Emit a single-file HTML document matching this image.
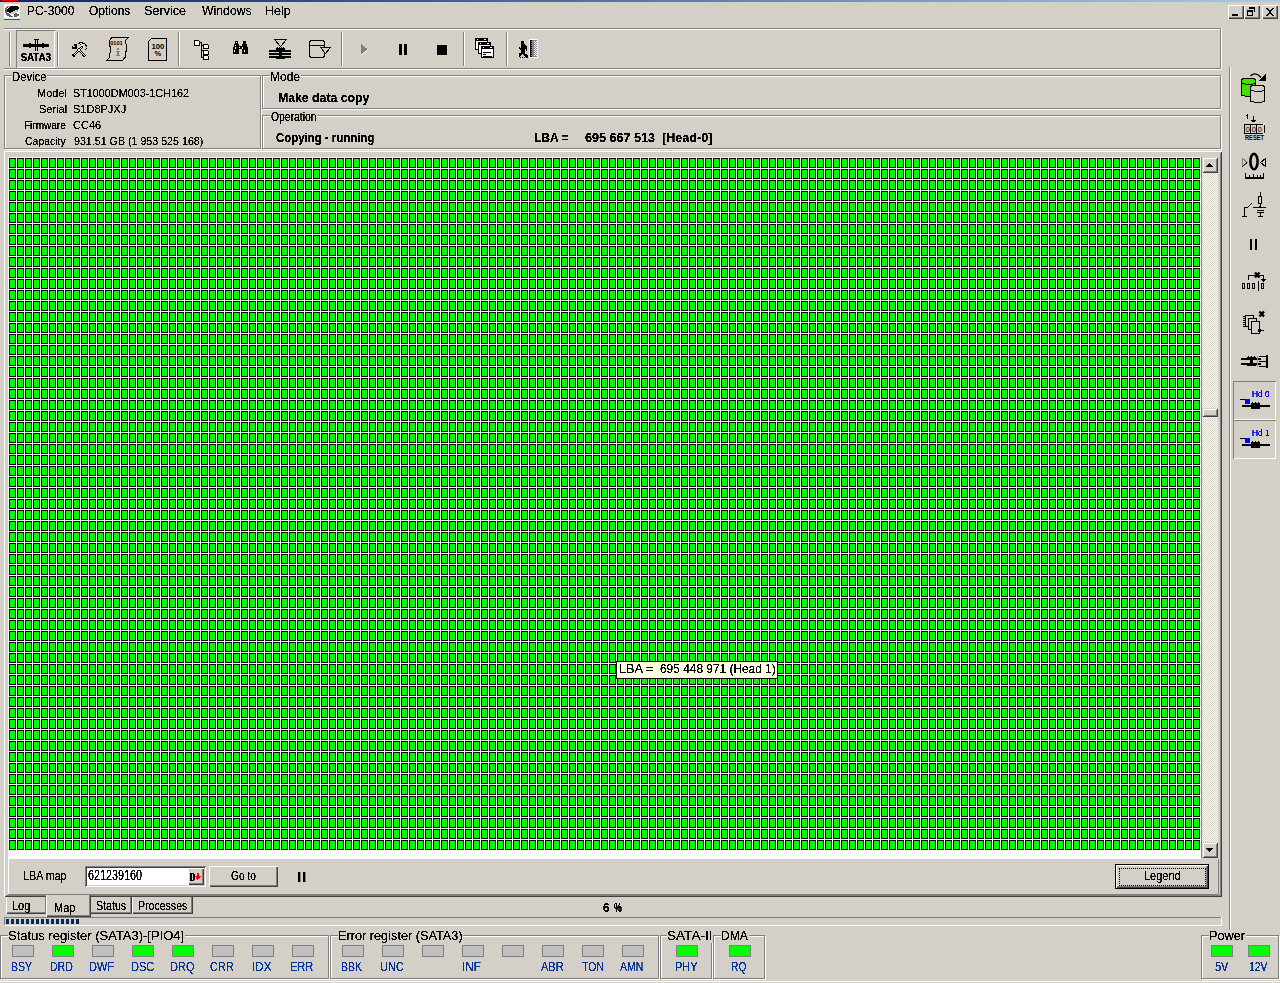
<!DOCTYPE html>
<html><head><meta charset="utf-8">
<style>
html,body{margin:0;padding:0;}
body{width:1280px;height:983px;overflow:hidden;background:#d4d0c8;position:relative;font-family:"Liberation Sans",sans-serif;color:#000;}
.a{position:absolute;box-sizing:border-box;}
.t{position:absolute;white-space:nowrap;line-height:16px;filter:url(#crisp);}
svg{position:absolute;shape-rendering:crispEdges;}
</style></head><body>
<svg width="0" height="0" style="position:absolute"><filter id="crisp" x="-5%" y="-20%" width="110%" height="140%"><feComponentTransfer><feFuncA type="discrete" tableValues="0 0 0 0.75 0.75 1 1 1 1 1"/></feComponentTransfer></filter></svg>
<div class="a" style="left:0;top:0;width:1280px;height:2px;background:linear-gradient(90deg,#0a246a,#a6caf0);"></div>
<div class="a" style="left:2px;top:0px;width:16px;height:1px;background:#f00;"></div>
<div class="t" style="left:27.00px;top:1.92px;font-size:12px;color:#000;transform:scale(1.0000,1.1111);transform-origin:0 0;">PC-3000</div>
<div class="t" style="left:89.00px;top:1.92px;font-size:12px;color:#000;transform:scale(1.0000,1.1111);transform-origin:0 0;">Options</div>
<div class="t" style="left:143.95px;top:1.92px;font-size:12px;color:#000;transform:scale(1.0513,1.1111);transform-origin:0 0;">Service</div>
<div class="t" style="left:202.00px;top:1.92px;font-size:12px;color:#000;transform:scale(1.0208,1.1111);transform-origin:0 0;">Windows</div>
<div class="t" style="left:264.96px;top:1.92px;font-size:12px;color:#000;transform:scale(1.0435,1.1111);transform-origin:0 0;">Help</div>
<div class="a" style="left:1228px;top:5px;width:16px;height:14px;background:#d4d0c8;box-shadow:inset 1px 1px #fff,inset -1px -1px #404040,inset -2px -2px #808080;"></div>
<div class="a" style="left:1244px;top:5px;width:16px;height:14px;background:#d4d0c8;box-shadow:inset 1px 1px #fff,inset -1px -1px #404040,inset -2px -2px #808080;"></div>
<div class="a" style="left:1262px;top:5px;width:16px;height:14px;background:#d4d0c8;box-shadow:inset 1px 1px #fff,inset -1px -1px #404040,inset -2px -2px #808080;"></div>
<div class="a" style="left:1232px;top:14px;width:6px;height:2px;background:#000;"></div>
<svg style="left:1244px;top:5px" width="16" height="14"><path d="M5 2h6v5h-1V4H5z" fill="#000"/><path d="M3 5h6v6H3zM4 7v3h4V7z" fill="#000" fill-rule="evenodd"/></svg>
<svg style="left:1262px;top:5px" width="16" height="14"><path d="M4 3h2v1h1v1h2V4h1V3h2v1h-1v1h-1v1H9v2h1v1h1v1h1v1h-2V10H9V9H7v1H6v1H4v-1h1V9h1V8h1V6H6V5H5V4H4z" fill="#000"/></svg>
<div class="a" style="left:4px;top:28px;width:1217px;height:1px;background:#808080;"></div>
<div class="a" style="left:4px;top:29px;width:1218px;height:1px;background:#fff;"></div>
<div class="a" style="left:4px;top:68px;width:1217px;height:1px;background:#808080;"></div>
<div class="a" style="left:4px;top:69px;width:1218px;height:1px;background:#fff;"></div>
<div class="a" style="left:1220px;top:28px;width:1px;height:41px;background:#808080;"></div>
<div class="a" style="left:1221px;top:28px;width:1px;height:42px;background:#fff;"></div>
<div class="a" style="left:9px;top:32px;width:1px;height:34px;background:#808080;"></div>
<div class="a" style="left:10px;top:32px;width:1px;height:34px;background:#fff;"></div>
<div class="a" style="left:16px;top:30px;width:39px;height:38px;box-shadow:inset 1px 1px #808080,inset -1px -1px #fff;"></div>
<div class="a" style="left:57px;top:32px;width:1px;height:34px;background:#808080;"></div>
<div class="a" style="left:58px;top:32px;width:1px;height:34px;background:#fff;"></div>
<div class="a" style="left:178px;top:32px;width:1px;height:34px;background:#808080;"></div>
<div class="a" style="left:179px;top:32px;width:1px;height:34px;background:#fff;"></div>
<div class="a" style="left:341px;top:32px;width:1px;height:34px;background:#808080;"></div>
<div class="a" style="left:342px;top:32px;width:1px;height:34px;background:#fff;"></div>
<div class="a" style="left:463px;top:32px;width:1px;height:34px;background:#808080;"></div>
<div class="a" style="left:464px;top:32px;width:1px;height:34px;background:#fff;"></div>
<div class="a" style="left:506px;top:32px;width:1px;height:34px;background:#808080;"></div>
<div class="a" style="left:507px;top:32px;width:1px;height:34px;background:#fff;"></div>
<div class="a" style="left:5px;top:76px;width:257px;height:74px;border:1px solid #fff;"></div>
<div class="a" style="left:4px;top:75px;width:257px;height:74px;border:1px solid #808080;"></div>
<div class="a" style="left:263px;top:76px;width:959px;height:34px;border:1px solid #fff;"></div>
<div class="a" style="left:262px;top:75px;width:959px;height:34px;border:1px solid #808080;"></div>
<div class="a" style="left:263px;top:116px;width:959px;height:34px;border:1px solid #fff;"></div>
<div class="a" style="left:262px;top:115px;width:959px;height:34px;border:1px solid #808080;"></div>
<div class="a" style="left:12px;top:70px;width:35px;height:14px;background:#d4d0c8;"></div>
<div class="t" style="left:12.06px;top:69.00px;font-size:12px;color:#000;transform:scale(0.9429,1.0000);transform-origin:0 0;">Device</div>
<div class="a" style="left:270px;top:70px;width:31px;height:14px;background:#d4d0c8;"></div>
<div class="t" style="left:270.00px;top:69.00px;font-size:12px;color:#000;">Mode</div>
<div class="a" style="left:270px;top:110px;width:47px;height:14px;background:#d4d0c8;"></div>
<div class="t" style="left:271.00px;top:109.00px;font-size:12px;color:#000;transform:scale(0.8654,1.0000);transform-origin:0 0;">Operation</div>
<div class="t" style="left:37.00px;top:85.00px;font-size:11px;color:#000;">Model</div>
<div class="t" style="left:39.00px;top:101.00px;font-size:11px;color:#000;">Serial</div>
<div class="t" style="left:24.09px;top:117.00px;font-size:11px;color:#000;transform:scale(0.9111,1.0000);transform-origin:0 0;">Firmware</div>
<div class="t" style="left:25.05px;top:133.00px;font-size:11px;color:#000;transform:scale(0.9524,1.0000);transform-origin:0 0;">Capacity</div>
<div class="t" style="left:73.02px;top:85.00px;font-size:11px;color:#000;transform:scale(0.9829,1.0000);transform-origin:0 0;">ST1000DM003-1CH162</div>
<div class="t" style="left:73.00px;top:101.00px;font-size:11px;color:#000;">S1D8PJXJ</div>
<div class="t" style="left:73.00px;top:117.00px;font-size:11px;color:#000;">CC46</div>
<div class="t" style="left:74.00px;top:133.00px;font-size:11px;color:#000;transform:scale(0.9699,1.0000);transform-origin:0 0;">931.51 GB (1 953 525 168)</div>
<div class="t" style="left:277.98px;top:90.00px;font-size:12px;font-weight:bold;color:#000;transform:scale(1.0227,1.0000);transform-origin:0 0;">Make data copy</div>
<div class="t" style="left:276.00px;top:130.00px;font-size:12px;font-weight:bold;color:#000;transform:scale(0.9515,1.0000);transform-origin:0 0;">Copying - running</div>
<div class="t" style="left:534.00px;top:130.00px;font-size:12px;font-weight:bold;color:#000;">LBA =</div>
<div class="t" style="left:585.00px;top:130.00px;font-size:12px;font-weight:bold;color:#000;transform:scale(1.0496,1.0000);transform-origin:0 0;">695 667 513&nbsp; [Head-0]</div>
<div class="a" style="left:4px;top:151px;width:1218px;height:746px;box-shadow:inset 1px 1px #fff,inset -1px -1px #404040,inset 2px 2px #d4d0c8,inset -2px -2px #808080;"></div>
<div class="a" style="left:8px;top:157px;width:1193px;height:702px;background:#fff;"></div>
<svg style="left:8px;top:157px" width="1193" height="694"><defs><pattern id="cell" x="0" y="0" width="8" height="11" patternUnits="userSpaceOnUse"><rect x="0" y="0" width="8" height="11" fill="#fff"/><rect x="1" y="1" width="7" height="10" fill="#000"/><rect x="2" y="2" width="5" height="8" fill="#00ff00"/></pattern></defs><rect x="0" y="0" width="1193" height="694" fill="url(#cell)"/></svg>
<div class="a" style="left:1201px;top:157px;width:1px;height:701px;background:#808080;"></div>
<svg style="left:1202px;top:157px" width="16" height="701"><defs><pattern id="chk" x="0" y="0" width="2" height="2" patternUnits="userSpaceOnUse"><rect width="2" height="2" fill="#fff"/><rect x="1" y="0" width="1" height="1" fill="#d4d0c8"/><rect x="0" y="1" width="1" height="1" fill="#d4d0c8"/></pattern></defs><rect width="16" height="701" fill="url(#chk)"/></svg>
<div class="a" style="left:1202px;top:157px;width:16px;height:16px;background:#d4d0c8;box-shadow:inset 1px 1px #d4d0c8,inset -1px -1px #404040,inset 2px 2px #fff,inset -2px -2px #808080;"></div>
<svg style="left:1202px;top:157px" width="16" height="16"><path d="M7 6h1v1h1v1h1v1h1v1H4V9h1V8h1V7h1z" fill="#000"/></svg>
<div class="a" style="left:1202px;top:842px;width:16px;height:16px;background:#d4d0c8;box-shadow:inset 1px 1px #d4d0c8,inset -1px -1px #404040,inset 2px 2px #fff,inset -2px -2px #808080;"></div>
<svg style="left:1202px;top:842px" width="16" height="16"><path d="M4 6h7v1h-1v1h-1v1h-1v1H7V9H6V8H5V7H4z" fill="#000"/></svg>
<div class="a" style="left:1202px;top:408px;width:16px;height:9px;background:#d4d0c8;box-shadow:inset 1px 1px #d4d0c8,inset -1px -1px #404040,inset 2px 2px #fff,inset -2px -2px #808080;"></div>
<div class="a" style="left:8px;top:859px;width:1px;height:35px;background:#fff;"></div>
<div class="a" style="left:8px;top:894px;width:1211px;height:1px;background:#808080;"></div>
<div class="a" style="left:1218px;top:859px;width:1px;height:36px;background:#808080;"></div>
<div class="a" style="left:616px;top:661px;width:162px;height:18px;background:#ffffe1;border:1px solid #000;"></div>
<div class="t" style="left:618.94px;top:659.92px;font-size:12px;color:#000;transform:scale(1.0645,1.1111);transform-origin:0 0;">LBA =</div>
<div class="t" style="left:660.01px;top:659.92px;font-size:12px;color:#000;transform:scale(0.9913,1.1111);transform-origin:0 0;">695 448 971 (Head 1)</div>
<div class="t" style="left:23.02px;top:865.75px;font-size:11px;color:#000;transform:scale(0.9767,1.1250);transform-origin:0 0;">LBA map</div>
<div class="a" style="left:85px;top:866px;width:121px;height:21px;background:#fff;box-shadow:inset 1px 1px #808080,inset -1px -1px #fff,inset 2px 2px #404040,inset -2px -2px #d4d0c8;"></div>
<div class="t" style="left:88.02px;top:865.25px;font-size:11px;color:#000;transform:scale(0.9815,1.2500);transform-origin:0 0;">621239160</div>
<div class="a" style="left:188px;top:868px;width:16px;height:17px;background:#d4d0c8;box-shadow:inset 1px 1px #fff,inset -1px -1px #404040,inset -2px -2px #808080;"></div>
<svg style="left:188px;top:868px" width="16" height="17"><path d="M2 5h4v1h1v6H6v1H2zM4 6v6h1V6z" fill="#000" fill-rule="evenodd"/><path d="M9 5h2v3h2v1h-1v1h-1v1h-1v1H9v-1H8V9H7V8h2z" fill="#f00"/></svg>
<div class="a" style="left:209px;top:866px;width:69px;height:21px;background:#d4d0c8;box-shadow:inset 1px 1px #fff,inset -1px -1px #404040,inset -2px -2px #808080;"></div>
<div class="t" style="left:231.00px;top:865.75px;font-size:11px;color:#000;transform:scale(0.9259,1.1250);transform-origin:0 0;">Go to</div>
<div class="a" style="left:298px;top:872px;width:2px;height:10px;background:#000;"></div>
<div class="a" style="left:303px;top:872px;width:2px;height:10px;background:#000;"></div>
<div class="a" style="left:300px;top:872px;width:1px;height:10px;background:rgba(0,0,0,0.35);"></div>
<div class="a" style="left:305px;top:872px;width:1px;height:10px;background:rgba(0,0,0,0.35);"></div>
<div class="a" style="left:1115px;top:864px;width:94px;height:25px;background:#d4d0c8;border:1px solid #000;box-shadow:inset 1px 1px #fff,inset -1px -1px #404040,inset -2px -2px #808080;"></div>
<div class="a" style="left:1119px;top:868px;width:87px;height:18px;border:1px dotted #000;"></div>
<div class="t" style="left:1144.00px;top:865.75px;font-size:11px;color:#000;transform:scale(1.0000,1.1250);transform-origin:0 0;">Legend</div>
<div class="a" style="left:6px;top:897px;width:41px;height:17px;background:#d4d0c8;box-shadow:inset 1px 0 #fff,inset -1px -1px #404040,inset -2px -2px #808080;"></div>
<div class="a" style="left:91px;top:897px;width:41px;height:17px;background:#d4d0c8;box-shadow:inset 0px 0 #fff,inset -1px -1px #404040,inset -2px -2px #808080;"></div>
<div class="a" style="left:132px;top:897px;width:61px;height:17px;background:#d4d0c8;box-shadow:inset 1px 0 #fff,inset -1px -1px #404040,inset -2px -2px #808080;"></div>
<div class="a" style="left:46px;top:895px;width:45px;height:22px;background:#d4d0c8;box-shadow:inset 1px 0 #fff,inset -1px -1px #404040,inset -2px -2px #808080;"></div>
<div class="t" style="left:12.00px;top:895.75px;font-size:11px;color:#000;transform:scale(1.0000,1.1250);transform-origin:0 0;">Log</div>
<div class="t" style="left:54.00px;top:897.75px;font-size:11px;color:#000;transform:scale(1.0000,1.1250);transform-origin:0 0;">Map</div>
<div class="t" style="left:96.03px;top:895.75px;font-size:11px;color:#000;transform:scale(0.9667,1.1250);transform-origin:0 0;">Status</div>
<div class="t" style="left:138.04px;top:895.75px;font-size:11px;color:#000;transform:scale(0.9600,1.1250);transform-origin:0 0;">Processes</div>
<div class="t" style="left:603.00px;top:900.00px;font-size:12px;font-weight:bold;color:#000;">6</div>
<div class="t" style="left:614.00px;top:900.00px;font-size:12px;font-weight:bold;color:#000;transform:scale(0.7273,1.0000);transform-origin:0 0;">%</div>
<div class="a" style="left:4px;top:917px;width:1218px;height:1px;background:#808080;"></div>
<div class="a" style="left:4px;top:917px;width:1px;height:9px;background:#808080;"></div>
<div class="a" style="left:4px;top:925px;width:1218px;height:1px;background:#fff;"></div>
<div class="a" style="left:1221px;top:917px;width:1px;height:9px;background:#fff;"></div>
<div class="a" style="left:6px;top:919px;width:3px;height:5px;background:#0a246a;"></div>
<div class="a" style="left:11px;top:919px;width:3px;height:5px;background:#0a246a;"></div>
<div class="a" style="left:16px;top:919px;width:3px;height:5px;background:#0a246a;"></div>
<div class="a" style="left:21px;top:919px;width:3px;height:5px;background:#0a246a;"></div>
<div class="a" style="left:26px;top:919px;width:3px;height:5px;background:#0a246a;"></div>
<div class="a" style="left:31px;top:919px;width:3px;height:5px;background:#0a246a;"></div>
<div class="a" style="left:36px;top:919px;width:3px;height:5px;background:#0a246a;"></div>
<div class="a" style="left:41px;top:919px;width:3px;height:5px;background:#0a246a;"></div>
<div class="a" style="left:46px;top:919px;width:3px;height:5px;background:#0a246a;"></div>
<div class="a" style="left:51px;top:919px;width:3px;height:5px;background:#0a246a;"></div>
<div class="a" style="left:56px;top:919px;width:3px;height:5px;background:#0a246a;"></div>
<div class="a" style="left:61px;top:919px;width:3px;height:5px;background:#0a246a;"></div>
<div class="a" style="left:66px;top:919px;width:3px;height:5px;background:#0a246a;"></div>
<div class="a" style="left:71px;top:919px;width:3px;height:5px;background:#0a246a;"></div>
<div class="a" style="left:76px;top:919px;width:3px;height:5px;background:#0a246a;"></div>
<div class="a" style="left:1px;top:936px;width:329px;height:44px;border:1px solid #fff;"></div>
<div class="a" style="left:0px;top:935px;width:329px;height:44px;border:1px solid #808080;"></div>
<div class="a" style="left:331px;top:936px;width:329px;height:44px;border:1px solid #fff;"></div>
<div class="a" style="left:330px;top:935px;width:329px;height:44px;border:1px solid #808080;"></div>
<div class="a" style="left:661px;top:936px;width:52px;height:44px;border:1px solid #fff;"></div>
<div class="a" style="left:660px;top:935px;width:52px;height:44px;border:1px solid #808080;"></div>
<div class="a" style="left:714px;top:936px;width:52px;height:44px;border:1px solid #fff;"></div>
<div class="a" style="left:713px;top:935px;width:52px;height:44px;border:1px solid #808080;"></div>
<div class="a" style="left:1202px;top:936px;width:78px;height:44px;border:1px solid #fff;"></div>
<div class="a" style="left:1201px;top:935px;width:78px;height:44px;border:1px solid #808080;"></div>
<div class="a" style="left:8px;top:928px;width:177px;height:15px;background:#d4d0c8;"></div>
<div class="t" style="left:7.92px;top:928.00px;font-size:12px;color:#000;transform:scale(1.0807,1.0000);transform-origin:0 0;">Status register (SATA3)-[PIO4]</div>
<div class="a" style="left:338px;top:928px;width:125px;height:15px;background:#d4d0c8;"></div>
<div class="t" style="left:337.94px;top:928.00px;font-size:12px;color:#000;transform:scale(1.0603,1.0000);transform-origin:0 0;">Error register (SATA3)</div>
<div class="a" style="left:667px;top:928px;width:46px;height:15px;background:#d4d0c8;"></div>
<div class="t" style="left:666.87px;top:928.00px;font-size:12px;color:#000;transform:scale(1.1316,1.0000);transform-origin:0 0;">SATA-II</div>
<div class="a" style="left:721px;top:928px;width:28px;height:15px;background:#d4d0c8;"></div>
<div class="t" style="left:721.00px;top:928.00px;font-size:12px;color:#000;">DMA</div>
<div class="a" style="left:1209px;top:928px;width:37px;height:15px;background:#d4d0c8;"></div>
<div class="t" style="left:1208.94px;top:928.00px;font-size:12px;color:#000;transform:scale(1.0606,1.0000);transform-origin:0 0;">Power</div>
<div class="a" style="left:0px;top:981px;width:1280px;height:1px;background:#fff;"></div>
<div class="a" style="left:12px;top:945px;width:22px;height:12px;border:1px solid #808080;background:#c0c0c0;"></div>
<div class="t" style="left:11.05px;top:956.75px;font-size:11px;color:#003399;transform:scale(0.9524,1.1250);transform-origin:0 0;">BSY</div>
<div class="a" style="left:52px;top:945px;width:22px;height:12px;border:1px solid #808080;background:#00ff00;"></div>
<div class="t" style="left:50.04px;top:956.75px;font-size:11px;color:#003399;transform:scale(0.9565,1.1250);transform-origin:0 0;">DRD</div>
<div class="a" style="left:92px;top:945px;width:22px;height:12px;border:1px solid #808080;background:#c0c0c0;"></div>
<div class="t" style="left:89.00px;top:956.75px;font-size:11px;color:#003399;transform:scale(1.0000,1.1250);transform-origin:0 0;">DWF</div>
<div class="a" style="left:132px;top:945px;width:22px;height:12px;border:1px solid #808080;background:#00ff00;"></div>
<div class="t" style="left:131.00px;top:956.75px;font-size:11px;color:#003399;transform:scale(1.0000,1.1250);transform-origin:0 0;">DSC</div>
<div class="a" style="left:172px;top:945px;width:22px;height:12px;border:1px solid #808080;background:#00ff00;"></div>
<div class="t" style="left:170.00px;top:956.75px;font-size:11px;color:#003399;transform:scale(1.0000,1.1250);transform-origin:0 0;">DRQ</div>
<div class="a" style="left:212px;top:945px;width:22px;height:12px;border:1px solid #808080;background:#c0c0c0;"></div>
<div class="t" style="left:210.00px;top:956.75px;font-size:11px;color:#003399;transform:scale(1.0000,1.1250);transform-origin:0 0;">CRR</div>
<div class="a" style="left:252px;top:945px;width:22px;height:12px;border:1px solid #808080;background:#c0c0c0;"></div>
<div class="t" style="left:251.94px;top:956.75px;font-size:11px;color:#003399;transform:scale(1.0588,1.1250);transform-origin:0 0;">IDX</div>
<div class="a" style="left:292px;top:945px;width:22px;height:12px;border:1px solid #808080;background:#c0c0c0;"></div>
<div class="t" style="left:290.00px;top:956.75px;font-size:11px;color:#003399;transform:scale(1.0000,1.1250);transform-origin:0 0;">ERR</div>
<div class="a" style="left:342px;top:945px;width:22px;height:12px;border:1px solid #808080;background:#c0c0c0;"></div>
<div class="t" style="left:341.05px;top:956.75px;font-size:11px;color:#003399;transform:scale(0.9524,1.1250);transform-origin:0 0;">BBK</div>
<div class="a" style="left:382px;top:945px;width:22px;height:12px;border:1px solid #808080;background:#c0c0c0;"></div>
<div class="t" style="left:380.00px;top:956.75px;font-size:11px;color:#003399;transform:scale(1.0000,1.1250);transform-origin:0 0;">UNC</div>
<div class="a" style="left:422px;top:945px;width:22px;height:12px;border:1px solid #808080;background:#c0c0c0;"></div>
<div class="a" style="left:462px;top:945px;width:22px;height:12px;border:1px solid #808080;background:#c0c0c0;"></div>
<div class="t" style="left:461.94px;top:956.75px;font-size:11px;color:#003399;transform:scale(1.0625,1.1250);transform-origin:0 0;">INF</div>
<div class="a" style="left:502px;top:945px;width:22px;height:12px;border:1px solid #808080;background:#c0c0c0;"></div>
<div class="a" style="left:542px;top:945px;width:22px;height:12px;border:1px solid #808080;background:#c0c0c0;"></div>
<div class="t" style="left:541.00px;top:956.75px;font-size:11px;color:#003399;transform:scale(1.0000,1.1250);transform-origin:0 0;">ABR</div>
<div class="a" style="left:582px;top:945px;width:22px;height:12px;border:1px solid #808080;background:#c0c0c0;"></div>
<div class="t" style="left:582.00px;top:956.75px;font-size:11px;color:#003399;transform:scale(0.9545,1.1250);transform-origin:0 0;">TON</div>
<div class="a" style="left:622px;top:945px;width:22px;height:12px;border:1px solid #808080;background:#c0c0c0;"></div>
<div class="t" style="left:620.00px;top:956.75px;font-size:11px;color:#003399;transform:scale(0.9583,1.1250);transform-origin:0 0;">AMN</div>
<div class="a" style="left:676px;top:945px;width:22px;height:12px;border:1px solid #808080;background:#00ff00;"></div>
<div class="t" style="left:675.00px;top:956.75px;font-size:11px;color:#003399;transform:scale(1.0000,1.1250);transform-origin:0 0;">PHY</div>
<div class="a" style="left:729px;top:945px;width:22px;height:12px;border:1px solid #808080;background:#00ff00;"></div>
<div class="t" style="left:731.07px;top:956.75px;font-size:11px;color:#003399;transform:scale(0.9333,1.1250);transform-origin:0 0;">RQ</div>
<div class="a" style="left:1211px;top:945px;width:22px;height:12px;border:1px solid #808080;background:#00ff00;"></div>
<div class="t" style="left:1215.00px;top:956.75px;font-size:11px;color:#003399;transform:scale(1.0000,1.1250);transform-origin:0 0;">5V</div>
<div class="a" style="left:1248px;top:945px;width:22px;height:12px;border:1px solid #808080;background:#00ff00;"></div>
<div class="t" style="left:1249.05px;top:956.75px;font-size:11px;color:#003399;transform:scale(0.9474,1.1250);transform-origin:0 0;">12V</div>
<div class="a" style="left:1229px;top:67px;width:1px;height:863px;background:#808080;"></div>
<div class="a" style="left:1230px;top:67px;width:1px;height:863px;background:#fff;"></div>
<svg style="left:4px;top:4px" width="16" height="16" viewBox="0 0 16 16"><rect x="0" y="0" width="16" height="14" fill="#fff"/><rect x="0" y="14" width="16" height="1" fill="#dcecec"/><rect x="0" y="15" width="16" height="1" fill="#f00"/><rect x="11" y="6" width="3" height="1" fill="#c8c8c8"/><rect x="9" y="7" width="5" height="1" fill="#c8c8c8"/><rect x="7" y="8" width="4" height="1" fill="#c8c8c8"/><rect x="6" y="9" width="4" height="1" fill="#c8c8c8"/><rect x="3" y="2" width="2" height="1" fill="#606060"/><rect x="2" y="3" width="2" height="1" fill="#606060"/><rect x="1" y="4" width="2" height="1" fill="#606060"/><rect x="1" y="5" width="2" height="1" fill="#606060"/><rect x="1" y="6" width="2" height="1" fill="#606060"/><rect x="1" y="7" width="2" height="1" fill="#606060"/><rect x="1" y="8" width="2" height="1" fill="#606060"/><rect x="2" y="9" width="3" height="1" fill="#606060"/><rect x="11" y="9" width="2" height="1" fill="#606060"/><rect x="2" y="10" width="4" height="1" fill="#606060"/><rect x="10" y="10" width="5" height="1" fill="#606060"/><rect x="3" y="11" width="4" height="1" fill="#606060"/><rect x="10" y="11" width="5" height="1" fill="#606060"/><rect x="5" y="12" width="4" height="1" fill="#606060"/><rect x="10" y="12" width="3" height="1" fill="#606060"/><rect x="6" y="2" width="8" height="1" fill="#000"/><rect x="5" y="3" width="10" height="1" fill="#000"/><rect x="4" y="4" width="11" height="1" fill="#000"/><rect x="3" y="5" width="11" height="1" fill="#000"/><rect x="3" y="6" width="8" height="1" fill="#000"/><rect x="3" y="7" width="6" height="1" fill="#000"/><rect x="5" y="8" width="2" height="1" fill="#000"/></svg>
<svg style="left:16px;top:32px" width="40" height="32" viewBox="0 0 40 32"><rect x="7" y="12" width="26" height="3" fill="#000"/><rect x="13" y="11" width="2" height="5" fill="#000"/><rect x="26" y="11" width="2" height="5" fill="#000"/><rect x="18" y="7" width="5" height="1" fill="#000"/><rect x="19" y="7" width="1" height="12" fill="#000"/><rect x="21" y="7" width="1" height="12" fill="#000"/></svg>
<div class="t" style="left:20.6px;top:50.1px;font-size:10px;font-weight:bold;letter-spacing:-0.2px;transform:scale(1.0,1.0);transform-origin:0 0;">SATA3</div>
<svg style="left:68px;top:38px" width="24" height="22" viewBox="0 0 24 22"><rect x="6" y="6" width="1" height="1" fill="#000"/><rect x="7" y="6" width="1" height="1" fill="#000"/><rect x="8" y="6" width="1" height="1" fill="#000"/><rect x="6" y="7" width="1" height="1" fill="#000"/><rect x="7" y="7" width="1" height="1" fill="#000"/><rect x="8" y="7" width="1" height="1" fill="#000"/><rect x="4" y="8" width="1" height="1" fill="#000"/><rect x="7" y="8" width="1" height="1" fill="#000"/><rect x="8" y="8" width="1" height="1" fill="#000"/><rect x="4" y="9" width="1" height="1" fill="#000"/><rect x="5" y="9" width="1" height="1" fill="#000"/><rect x="6" y="9" width="1" height="1" fill="#000"/><rect x="7" y="9" width="1" height="1" fill="#000"/><rect x="8" y="9" width="1" height="1" fill="#000"/><rect x="4" y="10" width="1" height="1" fill="#000"/><rect x="5" y="10" width="1" height="1" fill="#000"/><rect x="6" y="10" width="1" height="1" fill="#000"/><rect x="7" y="10" width="1" height="1" fill="#000"/><rect x="8" y="10" width="1" height="1" fill="#000"/><rect x="11" y="4" width="1" height="1" fill="#000"/><rect x="12" y="4" width="1" height="1" fill="#000"/><rect x="13" y="4" width="1" height="1" fill="#000"/><rect x="14" y="4" width="1" height="1" fill="#000"/><rect x="10" y="5" width="1" height="1" fill="#000"/><rect x="11" y="5" width="1" height="1" fill="#000"/><rect x="14" y="5" width="1" height="1" fill="#000"/><rect x="15" y="5" width="1" height="1" fill="#000"/><rect x="16" y="5" width="1" height="1" fill="#000"/><rect x="12" y="6" width="1" height="1" fill="#000"/><rect x="17" y="6" width="1" height="1" fill="#000"/><rect x="13" y="7" width="1" height="1" fill="#000"/><rect x="17" y="7" width="1" height="1" fill="#000"/><rect x="18" y="7" width="1" height="1" fill="#000"/><rect x="13" y="8" width="1" height="1" fill="#000"/><rect x="14" y="8" width="1" height="1" fill="#000"/><rect x="18" y="8" width="1" height="1" fill="#000"/><rect x="18" y="10" width="1" height="1" fill="#000"/><rect x="17" y="11" width="1" height="1" fill="#000"/><rect x="8" y="10" width="1" height="1" fill="#000"/><rect x="10" y="10" width="1" height="1" fill="#000"/><rect x="12" y="9" width="1" height="1" fill="#000"/><rect x="14" y="9" width="1" height="1" fill="#000"/><rect x="9" y="11" width="1" height="1" fill="#000"/><rect x="11" y="11" width="1" height="1" fill="#000"/><rect x="11" y="10" width="1" height="1" fill="#000"/><rect x="13" y="10" width="1" height="1" fill="#000"/><rect x="10" y="12" width="1" height="1" fill="#000"/><rect x="12" y="12" width="1" height="1" fill="#000"/><rect x="10" y="11" width="1" height="1" fill="#000"/><rect x="12" y="11" width="1" height="1" fill="#000"/><rect x="11" y="13" width="1" height="1" fill="#000"/><rect x="13" y="13" width="1" height="1" fill="#000"/><rect x="9" y="12" width="1" height="1" fill="#000"/><rect x="11" y="12" width="1" height="1" fill="#000"/><rect x="12" y="14" width="1" height="1" fill="#000"/><rect x="14" y="14" width="1" height="1" fill="#000"/><rect x="8" y="13" width="1" height="1" fill="#000"/><rect x="10" y="13" width="1" height="1" fill="#000"/><rect x="13" y="15" width="1" height="1" fill="#000"/><rect x="15" y="15" width="1" height="1" fill="#000"/><rect x="7" y="14" width="1" height="1" fill="#000"/><rect x="9" y="14" width="1" height="1" fill="#000"/><rect x="14" y="16" width="1" height="1" fill="#000"/><rect x="16" y="16" width="1" height="1" fill="#000"/><rect x="6" y="15" width="1" height="1" fill="#000"/><rect x="8" y="15" width="1" height="1" fill="#000"/><rect x="15" y="17" width="1" height="1" fill="#000"/><rect x="17" y="17" width="1" height="1" fill="#000"/><rect x="5" y="16" width="1" height="1" fill="#000"/><rect x="7" y="16" width="1" height="1" fill="#000"/><rect x="4" y="16" width="3" height="2" fill="#000"/><rect x="14" y="16" width="3" height="2" fill="#000"/><rect x="5" y="18" width="2" height="1" fill="#000"/><rect x="15" y="18" width="2" height="1" fill="#000"/><rect x="9" y="10" width="1" height="1" fill="#fff"/><rect x="13" y="9" width="1" height="1" fill="#fff"/><rect x="10" y="11" width="1" height="1" fill="#fff"/><rect x="12" y="10" width="1" height="1" fill="#fff"/><rect x="11" y="12" width="1" height="1" fill="#fff"/><rect x="11" y="11" width="1" height="1" fill="#fff"/><rect x="12" y="13" width="1" height="1" fill="#fff"/><rect x="10" y="12" width="1" height="1" fill="#fff"/><rect x="13" y="14" width="1" height="1" fill="#fff"/><rect x="9" y="13" width="1" height="1" fill="#fff"/><rect x="14" y="15" width="1" height="1" fill="#fff"/><rect x="8" y="14" width="1" height="1" fill="#fff"/><rect x="15" y="16" width="1" height="1" fill="#fff"/><rect x="7" y="15" width="1" height="1" fill="#fff"/><rect x="16" y="17" width="1" height="1" fill="#fff"/><rect x="6" y="16" width="1" height="1" fill="#fff"/><rect x="12" y="5" width="1" height="1" fill="#fff"/><rect x="14" y="6" width="1" height="1" fill="#fff"/><rect x="13" y="7" width="1" height="1" fill="#fff"/><rect x="15" y="8" width="1" height="1" fill="#fff"/></svg>
<svg style="left:104px;top:34px" width="28" height="28" viewBox="0 0 28 28"><path d="M7.5 3.5h17l-3 3v2.5l1 2v5l-1 3v4l-3 3.5h-16l3-3v-3l1-3v-4l-1-2.5v-4z" fill="none" stroke="#000" stroke-width="1.2"/><text x="6.2" y="11" font-family="Liberation Sans" font-size="5.6" font-weight="bold" fill="#000">0101</text><rect x="13" y="14" width="2" height="2" fill="#808080"/><rect x="12" y="17" width="4" height="1" fill="#808080"/><rect x="13" y="18" width="2" height="3" fill="#808080"/><rect x="12" y="21" width="4" height="1" fill="#808080"/></svg>
<svg style="left:148px;top:38px" width="20" height="23" viewBox="0 0 20 23"><path d="M3.5 0.5h15v22h-18v-19z" fill="none" stroke="#000" stroke-width="1"/><text x="3.4" y="10.8" font-family="Liberation Sans" font-size="7" font-weight="bold" fill="#000" textLength="13" lengthAdjust="spacingAndGlyphs">100</text><text x="6.6" y="18" font-family="Liberation Sans" font-size="7.5" font-weight="bold" fill="#000">%</text></svg>
<svg style="left:194px;top:40px" width="16" height="20" viewBox="0 0 16 20"><path d="M0.5 0.5h4l1 1v3.5h-5z" fill="#fff" stroke="#000"/><path d="M5 2h2v15h2M7 10h2M7 5h2" stroke="#000" fill="none"/><path d="M9.5 4.5h4l1 1v3h-5zM9.5 10.5h4l1 1v2.5h-5zM9.5 15.5h4l1 1v2.5h-5z" fill="#fff" stroke="#000"/></svg>
<svg style="left:233px;top:41px" width="15" height="13" viewBox="0 0 15 13"><path d="M2 0h3v3h1v2h3V3h1V0h3v3h1v3h1v7H9V8H6v5H0V6h1V3h1z" fill="#000"/><rect x="3" y="1" width="1" height="1" fill="#fff"/><rect x="9" y="1" width="1" height="1" fill="#fff"/><rect x="2" y="4" width="1" height="1" fill="#fff"/><rect x="8" y="4" width="1" height="1" fill="#fff"/><rect x="2" y="6" width="1" height="2" fill="#fff"/><rect x="6" y="6" width="1" height="1" fill="#fff"/><rect x="9" y="6" width="1" height="2" fill="#fff"/><rect x="1" y="9" width="1" height="2" fill="#fff"/><rect x="11" y="9" width="1" height="2" fill="#fff"/></svg>
<svg style="left:269px;top:39px" width="22" height="20" viewBox="0 0 22 20"><path d="M5.5 0.5h12l-6 7z" fill="none" stroke="#000"/><path d="M5 0h13v1H5z" fill="#000"/><rect x="0" y="11" width="22" height="2" fill="#000"/><rect x="0" y="14" width="22" height="2" fill="#000"/><rect x="0" y="17" width="22" height="2" fill="#000"/><rect x="7" y="9" width="9" height="2" fill="#000"/><rect x="7" y="19" width="9" height="1" fill="#000"/><rect x="10" y="13" width="3" height="1" fill="#000"/><rect x="10" y="16" width="3" height="1" fill="#000"/><rect x="8" y="8" width="1" height="1" fill="#000"/><rect x="10" y="8" width="1" height="1" fill="#000"/><rect x="12" y="8" width="1" height="1" fill="#000"/><rect x="14" y="8" width="1" height="1" fill="#000"/></svg>
<svg style="left:309px;top:40px" width="23" height="18" viewBox="0 0 23 18"><path d="M0.5 2.5q0-2 3-2h9q3 0 3 2v13q0 2-3 2h-9q-3 0-3-2zM0.5 4.5q0 1 3 1h9q3 0 3-1" fill="none" stroke="#000"/><path d="M11.5 7.5h10l-5 6z" fill="#d4d0c8" stroke="#000"/></svg>
<svg style="left:361px;top:44px" width="8" height="12" viewBox="0 0 8 12"><path d="M0 0l7 5.5L0 11z" fill="#808080"/><path d="M0 11l7-5.5" stroke="#fff" stroke-width="1" fill="none" shape-rendering="auto"/></svg>
<div class="a" style="left:399px;top:44px;width:3px;height:11px;background:#000;"></div>
<div class="a" style="left:404px;top:44px;width:3px;height:11px;background:#000;"></div>
<div class="a" style="left:437px;top:45px;width:10px;height:10px;background:#000;"></div>
<svg style="left:475px;top:38px" width="20" height="20" viewBox="0 0 20 20"><rect x="0.5" y="0.5" width="12" height="11" fill="#fff" stroke="#000"/><rect x="0" y="0" width="13" height="3" fill="#000"/><rect x="2" y="1" width="1" height="1" fill="#fff"/><rect x="9" y="1" width="2" height="1" fill="#fff"/><rect x="3.5" y="4.5" width="12" height="11" fill="#fff" stroke="#000"/><rect x="3" y="4" width="13" height="3" fill="#000"/><rect x="5" y="5" width="1" height="1" fill="#fff"/><rect x="12" y="5" width="2" height="1" fill="#fff"/><rect x="6.5" y="8.5" width="12" height="11" fill="#fff" stroke="#000"/><rect x="6" y="8" width="13" height="3" fill="#000"/><rect x="8" y="9" width="1" height="1" fill="#fff"/><rect x="15" y="9" width="2" height="1" fill="#fff"/><rect x="8" y="14" width="8" height="1" fill="#000"/><rect x="8" y="16" width="3" height="1" fill="#000"/><rect x="8" y="18" width="9" height="1" fill="#000"/></svg>
<svg style="left:517px;top:39px" width="22" height="20" viewBox="0 0 22 20"><rect x="4" y="2" width="3" height="1" fill="#000"/><rect x="4" y="3" width="3" height="1" fill="#000"/><rect x="4" y="4" width="3" height="1" fill="#000"/><rect x="4" y="5" width="4" height="1" fill="#000"/><rect x="4" y="6" width="5" height="1" fill="#000"/><rect x="4" y="7" width="6" height="1" fill="#000"/><rect x="2" y="8" width="1" height="1" fill="#000"/><rect x="4" y="8" width="6" height="1" fill="#000"/><rect x="2" y="9" width="2" height="1" fill="#000"/><rect x="4" y="9" width="5" height="1" fill="#000"/><rect x="9" y="9" width="1" height="1" fill="#000"/><rect x="3" y="10" width="5" height="1" fill="#000"/><rect x="9" y="10" width="1" height="1" fill="#000"/><rect x="4" y="11" width="4" height="1" fill="#000"/><rect x="9" y="11" width="1" height="1" fill="#000"/><rect x="4" y="12" width="4" height="1" fill="#000"/><rect x="4" y="13" width="4" height="1" fill="#000"/><rect x="2" y="14" width="6" height="1" fill="#000"/><rect x="2" y="15" width="3" height="1" fill="#000"/><rect x="6" y="15" width="4" height="1" fill="#000"/><rect x="2" y="16" width="2" height="1" fill="#000"/><rect x="7" y="16" width="4" height="1" fill="#000"/><rect x="2" y="17" width="1" height="1" fill="#000"/><rect x="8" y="17" width="3" height="1" fill="#000"/><rect x="9" y="18" width="2" height="1" fill="#000"/><rect x="3" y="18" width="1" height="1" fill="#000"/><rect x="5" y="18" width="1" height="1" fill="#000"/><rect x="7" y="18" width="1" height="1" fill="#000"/><rect x="12" y="0" width="9" height="19" fill="#fff"/><rect x="13" y="1" width="7" height="17" fill="#808080"/><rect x="13" y="1" width="1" height="17" fill="#000"/><rect x="14" y="1" width="1" height="1" fill="#000"/><rect x="14" y="3" width="1" height="1" fill="#000"/><rect x="14" y="5" width="1" height="1" fill="#000"/><rect x="14" y="7" width="1" height="1" fill="#000"/><rect x="14" y="9" width="1" height="1" fill="#000"/><rect x="14" y="11" width="1" height="1" fill="#000"/><rect x="14" y="13" width="1" height="1" fill="#000"/><rect x="14" y="15" width="1" height="1" fill="#000"/><rect x="14" y="17" width="1" height="1" fill="#000"/><rect x="17" y="2" width="1" height="1" fill="#fff"/><rect x="17" y="4" width="1" height="1" fill="#fff"/><rect x="17" y="6" width="1" height="1" fill="#fff"/><rect x="17" y="8" width="1" height="1" fill="#fff"/><rect x="17" y="10" width="1" height="1" fill="#fff"/><rect x="17" y="12" width="1" height="1" fill="#fff"/><rect x="17" y="14" width="1" height="1" fill="#fff"/><rect x="17" y="16" width="1" height="1" fill="#fff"/><rect x="19" y="2" width="1" height="1" fill="#fff"/><rect x="19" y="4" width="1" height="1" fill="#fff"/><rect x="19" y="6" width="1" height="1" fill="#fff"/><rect x="19" y="8" width="1" height="1" fill="#fff"/><rect x="19" y="10" width="1" height="1" fill="#fff"/><rect x="19" y="12" width="1" height="1" fill="#fff"/><rect x="19" y="14" width="1" height="1" fill="#fff"/><rect x="19" y="16" width="1" height="1" fill="#fff"/><rect x="18" y="3" width="1" height="1" fill="#fff"/><rect x="18" y="5" width="1" height="1" fill="#fff"/><rect x="18" y="7" width="1" height="1" fill="#fff"/><rect x="18" y="9" width="1" height="1" fill="#fff"/><rect x="18" y="11" width="1" height="1" fill="#fff"/><rect x="18" y="13" width="1" height="1" fill="#fff"/><rect x="18" y="15" width="1" height="1" fill="#fff"/></svg>
<svg style="left:1240px;top:71px" width="28" height="33" viewBox="0 0 28 33"><path d="M1.5 9.5q0-2 3-2h8q3 0 3 2v14q0 1.5-3 1.5h-8q-3 0-3-1.5z" fill="#40e000" stroke="#000"/><path d="M1.5 11.5q0 1.5 3 1.5h8q3 0 3-1.5" fill="none" stroke="#000"/><path d="M10.5 16.5q0-2 3-2h8q3 0 3 2v13q0 1.5-3 1.5h-8q-3 0-3-1.5z" fill="#d4d0c8" stroke="#000"/><path d="M10.5 18.5q0 1.5 3 1.5h8q3 0 3-1.5" fill="none" stroke="#000"/><path d="M10.5 5q5-5 10.5 1.5" fill="none" stroke="#000" stroke-width="1.3" shape-rendering="auto"/><path d="M26 2v8h-7z" fill="#000"/></svg>
<svg style="left:1242px;top:113px" width="26" height="28" viewBox="0 0 26 28"><path d="M5 1h1v5H5zM4 2h1v1H4z" fill="#000"/><path d="M11 3h1v6h-1zM9 7h5v1H9zM10 8h3v1h-3z" fill="#000"/><rect x="2.5" y="11.5" width="20" height="9" fill="none" stroke="#000"/><path d="M8.5 11v10M14.5 11v10" stroke="#000"/><path d="M21 11h2M21 20h2" stroke="#fff"/><text x="3.8" y="19" font-family="Liberation Sans" font-size="7.5" fill="#000">0</text><text x="9.8" y="19" font-family="Liberation Sans" font-size="7.5" fill="#000">0</text><text x="15.8" y="19" font-family="Liberation Sans" font-size="7.5" fill="#000">0</text><text x="3" y="27" font-family="Liberation Sans" font-size="6.5" font-weight="bold" fill="#000" textLength="19" lengthAdjust="spacingAndGlyphs">RESET</text></svg>
<svg style="left:1241px;top:151px" width="26" height="29" viewBox="0 0 26 29"><path d="M1.5 7.5v8l5-4z" fill="none" stroke="#808080"/><path d="M6 11.5l-4.5 4" stroke="#000" fill="none"/><path d="M24.5 7.5v8l-5-4z" fill="none" stroke="#000"/><ellipse cx="13" cy="10.5" rx="3.6" ry="7.8" fill="none" stroke="#000" stroke-width="2.6" shape-rendering="auto"/><rect x="4" y="26" width="19" height="2" fill="#000"/><rect x="4" y="22" width="1" height="4" fill="#000"/><rect x="8" y="24" width="1" height="2" fill="#000"/><rect x="12" y="23" width="1" height="3" fill="#000"/><rect x="16" y="24" width="1" height="2" fill="#000"/><rect x="22" y="22" width="1" height="4" fill="#000"/><rect x="19" y="24" width="1" height="2" fill="#000"/></svg>
<svg style="left:1240px;top:192px" width="28" height="26" viewBox="0 0 28 26"><path d="M20 0v4M18.5 4.5h3v7h-3zM20 12v3M13 15h13M17 18h7M17 20h7M20 20v4M18 24h5M4 15v9M2 24h5M4 15h4l4-4" stroke="#000" fill="none"/><circle cx="20" cy="15" r="1.6" fill="#000"/></svg>
<div class="a" style="left:1250px;top:239px;width:2px;height:11px;background:#000;"></div>
<div class="a" style="left:1255px;top:239px;width:2px;height:11px;background:#000;"></div>
<svg style="left:1240px;top:271px" width="28" height="22" viewBox="0 0 28 22"><path d="M2.5 12.5h2v5h-2zM7.5 12.5h2v5h-2zM12.5 12.5h2v5h-2zM21.5 12.5h2v5h-2z" fill="none" stroke="#000"/><path d="M18.5 10v10M8.5 9V4.5h15v4" stroke="#000" fill="none"/><path d="M21 8h5v1h-1v1h-1v1h-1v-1h-1V9h-1z" fill="#000"/><path d="M15 1.5l4.5 5M19.5 1.5l-4.5 5" stroke="#000" stroke-width="2.4" shape-rendering="auto"/></svg>
<svg style="left:1242px;top:310px" width="24" height="25" viewBox="0 0 24 25"><path d="M3.5 5.5h8v11h-8z" fill="#d4d0c8" stroke="#000"/><path d="M6.5 8.5h8v11h-8z" fill="#d4d0c8" stroke="#000"/><path d="M9.5 11.5h8v12h-8z" fill="#d4d0c8" stroke="#000"/><path d="M1 6h2M1 8h2M1 10h2M1 12h2M1 14h2M1 16h2" stroke="#000"/><path d="M17 20h5" stroke="#000"/><rect x="16" y="19" width="3" height="3" fill="#000"/><path d="M17.5 1.5l4.5 5M22 1.5l-4.5 5" stroke="#000" stroke-width="2.4" shape-rendering="auto"/></svg>
<svg style="left:1240px;top:354px" width="28" height="16" viewBox="0 0 28 16"><rect x="1" y="4" width="20" height="2" fill="#000"/><rect x="1" y="9" width="20" height="2" fill="#000"/><rect x="7" y="3" width="9" height="3" fill="#000"/><rect x="10" y="6" width="3" height="3" fill="#000"/><rect x="7" y="9" width="9" height="3" fill="#000"/><rect x="8" y="2" width="1" height="1" fill="#000"/><rect x="11" y="2" width="1" height="1" fill="#000"/><rect x="14" y="2" width="1" height="1" fill="#000"/><rect x="19" y="2" width="7" height="1" fill="#000"/><rect x="19" y="7" width="7" height="1" fill="#000"/><rect x="19" y="12" width="7" height="1" fill="#000"/><rect x="26" y="1" width="2" height="13" fill="#000"/><rect x="17" y="2" width="1" height="11" fill="#909090"/></svg>
<div class="a" style="left:1233px;top:381px;width:43px;height:39px;box-shadow:inset 1px 1px #808080,inset -1px -1px #fff;"></div>
<div class="t" style="left:1252.2px;top:387px;font-size:10px;font-weight:normal;color:#0000ff;transform:scale(0.84,0.92);transform-origin:0 0;">Hd 0</div>
<svg style="left:1240px;top:398px" width="30" height="12" viewBox="0 0 30 12"><rect x="0" y="1" width="5" height="1" fill="#000"/><rect x="2" y="7" width="28" height="2" fill="#000"/><rect x="11" y="5" width="9" height="6" fill="#000"/><rect x="12" y="4" width="1" height="1" fill="#000"/><rect x="15" y="4" width="1" height="1" fill="#000"/><rect x="18" y="4" width="1" height="1" fill="#000"/><rect x="5" y="1" width="5" height="5" fill="#0000ff"/></svg>
<div class="a" style="left:1233px;top:420px;width:43px;height:39px;box-shadow:inset 1px 1px #808080,inset -1px -1px #fff;"></div>
<div class="t" style="left:1252.2px;top:426px;font-size:10px;font-weight:normal;color:#0000ff;transform:scale(0.84,0.92);transform-origin:0 0;">Hd 1</div>
<svg style="left:1240px;top:437px" width="30" height="12" viewBox="0 0 30 12"><rect x="0" y="1" width="5" height="1" fill="#000"/><rect x="2" y="7" width="28" height="2" fill="#000"/><rect x="11" y="5" width="9" height="6" fill="#000"/><rect x="12" y="4" width="1" height="1" fill="#000"/><rect x="15" y="4" width="1" height="1" fill="#000"/><rect x="18" y="4" width="1" height="1" fill="#000"/><rect x="5" y="1" width="5" height="5" fill="#0000ff"/></svg>
</body></html>
